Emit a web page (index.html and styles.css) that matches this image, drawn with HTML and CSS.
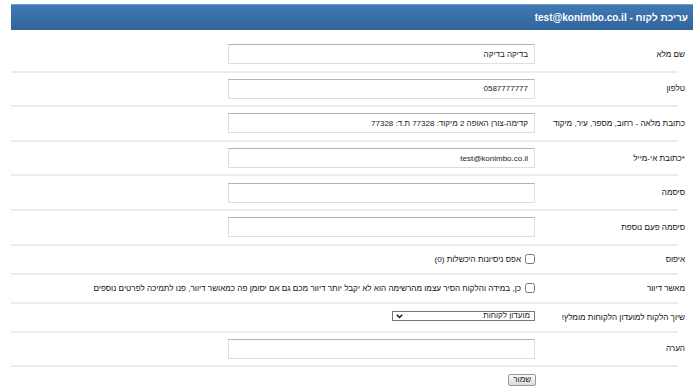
FILE: index.html
```html
<!DOCTYPE html>
<html lang="he" dir="rtl">
  <head>
    <meta charset="UTF-8">
    <meta name="viewport" content="width=device-width, initial-scale=1.0">
    <title>עריכת לקוח</title>
    <link rel="stylesheet" href="styles.css">
  </head>
  <body>
    <div class="page-title">עריכת לקוח - test@konimbo.co.il</div>

    <form class="customer-form">
      <div class="form-row">
        <label class="field-label">שם מלא</label>
        <div class="field"><input type="text" class="text-input" value="בדיקה בדיקה"></div>
      </div>
      <div class="form-row">
        <label class="field-label">טלפון</label>
        <div class="field"><input type="text" class="text-input" value="0587777777"></div>
      </div>
      <div class="form-row">
        <label class="field-label">כתובת מלאה - רחוב, מספר, עיר, מיקוד</label>
        <div class="field"><input type="text" class="text-input" value="קדימה-צורן האופה 2 מיקוד: 77328 ת.ד: 77328"></div>
      </div>
      <div class="form-row">
        <label class="field-label">*כתובת אי-מייל</label>
        <div class="field"><input type="text" class="text-input" value="test@konimbo.co.il"></div>
      </div>
      <div class="form-row">
        <label class="field-label">סיסמה</label>
        <div class="field"><input type="password" class="text-input"></div>
      </div>
      <div class="form-row">
        <label class="field-label">סיסמה פעם נוספת</label>
        <div class="field"><input type="password" class="text-input"></div>
      </div>
      <div class="form-row short-row">
        <label class="field-label">איפוס</label>
        <div class="field check-field">
          <input type="checkbox" class="check">
          <span>אפס ניסיונות היכשלות (0)</span>
        </div>
      </div>
      <div class="form-row short-row">
        <label class="field-label">מאשר דיוור</label>
        <div class="field check-field">
          <input type="checkbox" class="check">
          <span>כן, במידה והלקוח הסיר עצמו מהרשימה הוא לא יקבל יותר דיוור מכם גם אם יסומן פה כמאושר דיוור, פנו לתמיכה לפרטים נוספים</span>
        </div>
      </div>
      <div class="form-row short-row">
        <label class="field-label">שיוך הלקוח למועדון הלקוחות מומלץ!</label>
        <div class="field">
          <div class="select-wrap">
            <select class="select-input">
              <option>מועדון לקוחות</option>
            </select>
            <svg class="select-arrow" width="7" height="5" viewBox="0 0 7 5"><path d="M0.8 0.8 L3.5 3.6 L6.2 0.8" fill="none" stroke="#111" stroke-width="1.4"/></svg>
          </div>
        </div>
      </div>
      <div class="form-row">
        <label class="field-label">הערה</label>
        <div class="field"><input type="text" class="text-input"></div>
      </div>
      <div class="form-actions">
        <button type="button" class="save-btn">שמור</button>
      </div>
    </form>
  </body>
</html>
```

FILE: styles.css
```css
html {
  font-family: "Liberation Sans", Arial, sans-serif;
}

body {
  margin: 0;
  padding-top: 4px;
  background: #fff;
  color: #111;
  font-size: 8.1px;
}

.page-title {
  margin: 0 4px 0 11px;
  height: 26px;
  line-height: 26px;
  padding-right: 5px;
  background: linear-gradient(#4079b3, #31649b);
  border-top: 1px solid #6f9ccb;
  box-sizing: border-box;
  color: #fff;
  font-size: 10px;
  font-weight: bold;
}

.customer-form {
  margin: 8px 19px 0 11px;
}

.form-row {
  display: flex;
  align-items: center;
  height: 34.6px;
  border-bottom: 2px solid #ececec;
  box-sizing: border-box;
}

.short-row {
  height: 29px;
}

.field-label {
  width: 143px;
  margin-right: -7px;
  padding-left: 7px;
  flex-shrink: 0;
  white-space: nowrap;
}

.field {
  flex: 1;
  display: flex;
  align-items: center;
  gap: 4px;
}

.text-input {
  width: 307px;
  height: 20px;
  box-sizing: border-box;
  border: 1px solid #dedede;
  border-top-color: #b3b3b3;
  padding: 0 6px;
  font-family: inherit;
  font-size: 8px;
  color: #222;
  direction: rtl;
}

.check {
  width: 10px;
  height: 10px;
  margin: 0;
}

.select-wrap {
  position: relative;
  width: 143px;
  height: 10px;
  margin-top: -3px;
}

.select-input {
  appearance: none;
  width: 143px;
  height: 10px;
  box-sizing: border-box;
  border: 1px solid #777;
  padding: 0 4px;
  background: #fff;
  font-family: inherit;
  font-size: 8px;
  line-height: 8px;
  color: #222;
}

.select-arrow {
  position: absolute;
  left: 4px;
  top: 3px;
}

.form-actions {
  padding: 7px 142px 0 0;
}

.save-btn {
  height: 12px;
  padding: 0 4px;
  border: 1px solid #999;
  border-radius: 2px;
  background: linear-gradient(#fafafa, #dcdcdc);
  font-family: inherit;
  font-size: 8px;
  line-height: 8px;
  color: #222;
}
```
